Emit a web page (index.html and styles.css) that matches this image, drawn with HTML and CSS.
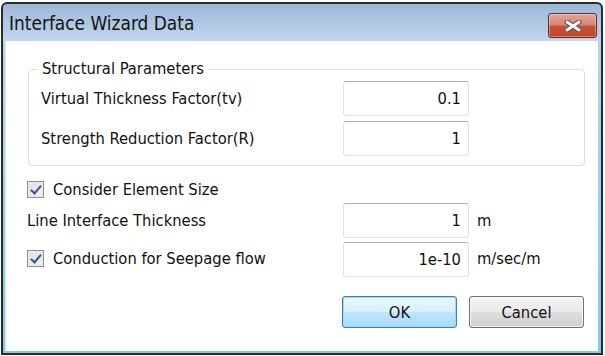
FILE: index.html
```html
<!DOCTYPE html>
<html lang="en">
<head>
  <meta charset="UTF-8" />
  <title>Interface Wizard Data</title>
  <link rel="stylesheet" href="styles.css">
</head>
<body>
  <div class="window">
    <div class="titlebar">
      <span class="title">Interface Wizard Data</span>
      <div class="close">
        <svg width="18" height="12" viewBox="0 0 18 12">
          <path d="M3 2 L15 10 M15 2 L3 10" stroke="#5a4a48" stroke-width="5" stroke-linecap="round" />
          <path d="M3 2 L15 10 M15 2 L3 10" stroke="#fff" stroke-width="3" stroke-linecap="round" />
        </svg>
      </div>
    </div>

    <div class="client">
      <!-- Structural Parameters -->
      <div class="group">
        <span class="legend">Structural Parameters</span>
        <div class="group-grid">
          <span class="label">Virtual Thickness Factor(tv)</span>
          <div class="field">0.1</div>
          <span class="label">Strength Reduction Factor(R)</span>
          <div class="field">1</div>
        </div>
      </div>

      <div class="options">
        <label class="check-row"><span class="checkbox checked"></span>Consider Element Size</label>
        <span></span>
        <span></span>

        <span class="label">Line Interface Thickness</span>
        <div class="field">1</div>
        <span class="unit">m</span>

        <label class="check-row"><span class="checkbox checked"></span>Conduction for Seepage flow</label>
        <div class="field">1e-10</div>
        <span class="unit">m/sec/m</span>
      </div>

      <div class="buttons">
        <button class="btn btn-default">OK</button>
        <button class="btn">Cancel</button>
      </div>
    </div>
  </div>
</body>
</html>
```

FILE: styles.css
```css
* { box-sizing: border-box; }
body {
  margin: 0;
  background: #fff;
  font-family: "DejaVu Sans Condensed", "DejaVu Sans", sans-serif;
  font-size: 16.4px;
  color: #111;
}
.window {
  width: 602px;
  height: 353px;
  margin: 2px 0 0 1px;
  border: 2px solid #2a2a2a;
  border-radius: 6px 6px 0 0;
  background: linear-gradient(180deg, #9db7d7 0%, #c2d7ee 37px, #b3d6ee 38px, #7fcbea 100%);
  display: flex;
  flex-direction: column;
  overflow: hidden;
}
.titlebar {
  height: 37px;
  display: flex;
  align-items: center;
  justify-content: space-between;
  padding: 0 4px 0 6px;
}
.title {
  font-size: 18.9px;
  color: #121212;
}
.close {
  width: 49px;
  height: 25px;
  margin-top: 6px;
  border: 1px solid #5e2d28;
  border-radius: 3px;
  background: linear-gradient(180deg, #e3a697 0%, #d88877 45%, #c85139 55%, #c2432c 100%);
  display: flex;
  align-items: center;
  justify-content: center;
  box-shadow: inset 0 0 0 1px rgba(255,255,255,0.35);
}
.client {
  flex: 1;
  margin: 0 3px 2px 2px;
  background: #fff;
  border-left: 1px solid #d6e8f5;
  padding: 0 0 0 21px;
  display: flex;
  flex-direction: column;
}
.group {
  position: relative;
  margin: 28px 13px 0 1px;
  border: 1px solid #d5dfe5;
  border-radius: 4px;
  padding: 11px 0 9px 12px;
}
.legend {
  position: absolute;
  top: -11px;
  left: 9px;
  padding: 0 4px;
  background: #fff;
  line-height: 19px;
}
.group-grid {
  display: grid;
  grid-template-columns: 302px 126px;
  grid-auto-rows: 35px;
  row-gap: 5px;
  align-items: center;
}
.field {
  height: 35px;
  border: 1px solid #dfe3e8;
  border-top-color: #abadb3;
  border-radius: 3px;
  text-align: right;
  padding-right: 7px;
  line-height: 33px;
  color: #111;
}
.options {
  margin-top: 12px;
  display: grid;
  grid-template-columns: 316px 126px auto;
  grid-template-rows: 22px 35px 35px;
  row-gap: 3px;
  align-items: center;
}
.options .field:last-of-type { margin-top: 2px; }
.unit { padding-left: 8px; }
.check-row {
  display: flex;
  align-items: center;
  gap: 9px;
}
.checkbox {
  width: 17px;
  height: 17px;
  border: 1px solid #8e8f8f;
  background: linear-gradient(135deg, #dcdcdc, #f7f7f7);
  box-shadow: inset 0 0 0 2px #e9e9e9;
  position: relative;
}
.checkbox.checked::after {
  content: "";
  position: absolute;
  left: 5px;
  top: 1px;
  width: 4px;
  height: 9px;
  border: solid #3c5294;
  border-width: 0 2px 2px 0;
  transform: rotate(40deg);
}
.buttons {
  margin-top: 20px;
  padding-right: 14px;
  display: flex;
  justify-content: flex-end;
  gap: 12px;
}
.btn {
  width: 115px;
  height: 32px;
  font: inherit;
  color: #111;
  border: 1px solid #707070;
  border-radius: 3px;
  background: linear-gradient(180deg, #f3f3f3 0%, #ebebeb 48%, #dddddd 52%, #cfcfcf 100%);
  box-shadow: inset 0 0 0 1px rgba(255,255,255,0.7);
}
.btn-default {
  border-color: #3c7fb1;
  background: linear-gradient(180deg, #eaf6fd 0%, #d9f0fc 48%, #bee6fd 52%, #a7d9f5 100%);
  box-shadow: inset 0 0 0 1px #9fd7f4;
}
```
